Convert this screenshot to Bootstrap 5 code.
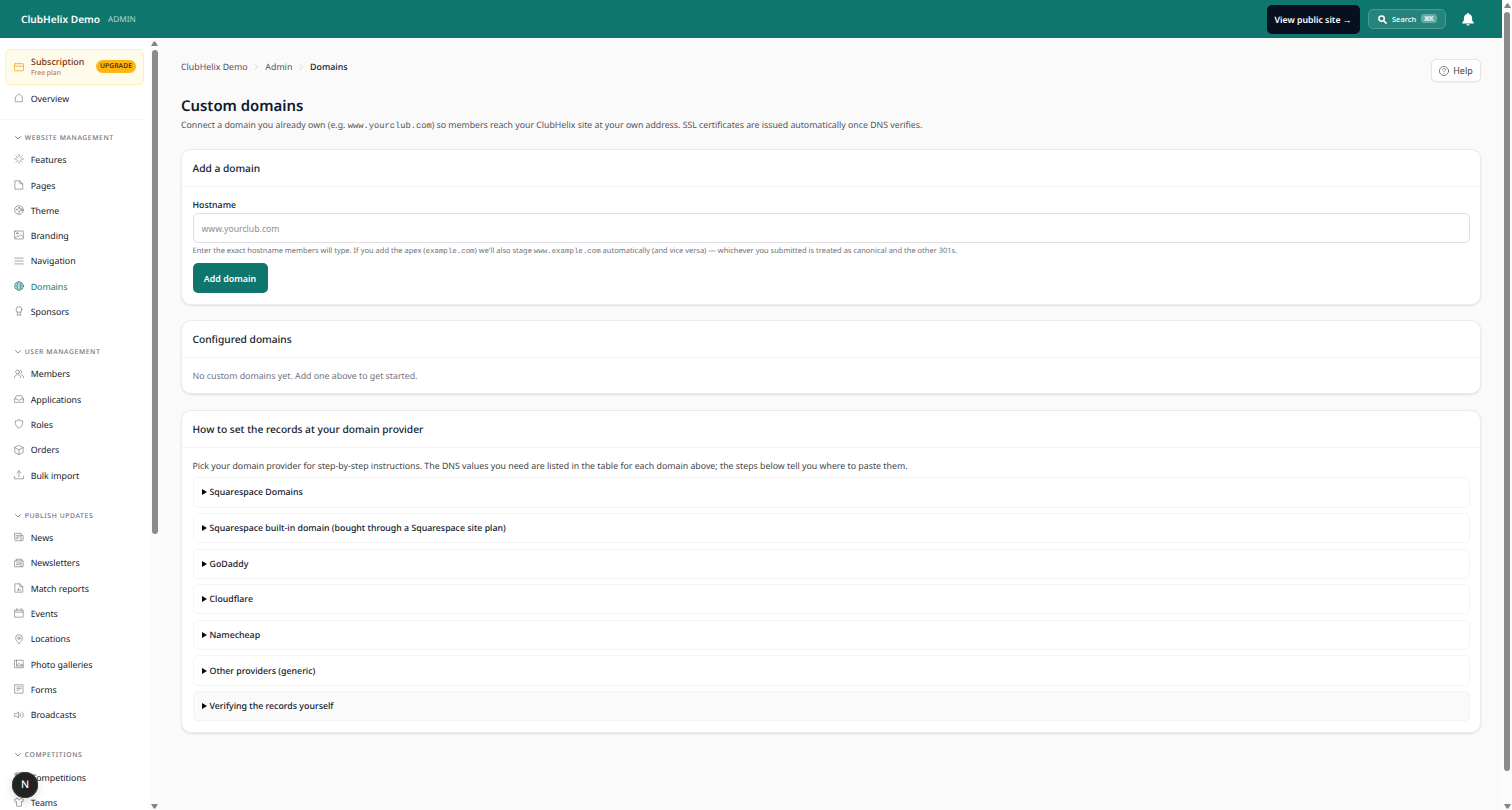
<!DOCTYPE html>
<html lang="en">
<head>
<meta charset="utf-8">
<meta name="viewport" content="width=device-width, initial-scale=1">
<title>Custom domains - ClubHelix Demo</title>
<link href="https://cdn.jsdelivr.net/npm/bootstrap@5.3.0/dist/css/bootstrap.min.css" rel="stylesheet">
<style>
:root{--teal:#0f766e;--ink:#10182b;--line:#f3f3f5}
body{font-family:"Noto Sans","Open Sans",sans-serif;font-size:8.8px;line-height:12px;color:var(--ink);background:#fafafa;height:100vh;text-rendering:geometricPrecision}
svg{fill:none;stroke:currentColor;stroke-width:1.5;stroke-linecap:round;stroke-linejoin:round;flex:none;display:block}
code{font-family:"Liberation Mono",monospace;color:inherit}
.topbar{height:38px;background:var(--teal);color:#fff;padding:0 28.5px 0 21px}
.brand-name{font-size:10.15px;font-weight:600;margin-right:8px}
.brand-tag{font-size:8.2px;color:#b4d8d4;padding-top:1px}
.btn-site{background:#08101f;color:#fff;font-size:8.75px;font-weight:600;width:93px;height:29px;border-radius:5px;margin-right:8px;line-height:12px;padding:2px 0 0}
.btn-search{width:78px;height:20px;border:1px solid #4b9a93;background:#27847c;border-radius:5px;font-size:7.5px;font-weight:500;color:#fff;padding:0 8px 0 9px;line-height:10px}
.btn-search span{margin-left:5.5px}
.btn-search kbd{font:600 6.5px/9px "Noto Sans","DejaVu Sans",sans-serif;background:#62aaa4;border-radius:3px;padding:0;width:16px;height:9.5px;text-align:center;letter-spacing:-.6px;margin-bottom:1px}
.side{width:150px;background:#fff}
.plan{margin:10.5px 6px 0 5px;height:36px;border:1px solid #fff0b8;background:#fffbeb;border-radius:5px;padding:0 7px 0 7.5px;color:#7b3306}
.plan-text{margin-left:7.5px;padding-top:1.5px}
.plan-name{font-weight:500;font-size:8.95px;line-height:12px}
.plan-tier{font-size:6.9px;line-height:11px;color:#bd6a33}
.plan-up{background:#fdb714;color:#5c2a06;font-size:6.8px;font-weight:600;border-radius:7px;width:40px;height:12.5px;line-height:12.5px;text-align:center}
.nav-first{margin:0 6px 0 0;padding:1.5px 0 8px;border-bottom:1px solid #f7f7f8}
.nav-row{height:25.33px;padding:0 0 0 13.5px;color:var(--ink);text-decoration:none}
.nav-row svg{width:10px;height:10px;color:#71717b;margin-right:7.2px;position:relative;top:-.8px}
.nav-row.active,.nav-row.active svg{color:var(--teal)}
.nav-head{height:20.7px;padding:1px 0 0 14.5px;font-size:6.8px;letter-spacing:.6px;font-weight:500;color:#71717b}
.nav-head svg{width:6px;height:6px;margin-right:4.2px;stroke-width:1.6}
.nav-group{margin-bottom:16.3px}
.sbar{background:#fcfcfc;color:#858585;padding:3px 0 1px}
.sbar svg{width:7px;height:5px;fill:currentColor;stroke:none}
.thumb{background:#8b8b8b;width:6px;border-radius:3px}
main{padding:20px 21px 0 22px;min-width:0}
.crumbs{height:18px;color:#52525c}
.crumbs svg{width:6px;height:6px;color:#d0d0d5;margin:0 5.9px}
.btn-help{width:50px;height:23px;border:1px solid #e4e4e7;background:#fff;border-radius:5px;font-size:9px;color:#3f3f46;line-height:12px;margin-top:1px;padding:0;box-shadow:0 1px 1px #0000000a}
h1{font-size:14.9px;line-height:20px;font-weight:600;margin:14px 0 0}
.intro{color:#52525c;line-height:14px;margin:2px 0 15.5px;font-size:8.76px}
.intro code{font-size:8.75px}
.panel{border:1px solid #ebebed;border-radius:10px;background:#fff;margin-bottom:15.4px;box-shadow:0 1px 2px #0000001c}
.panel-head{height:37.2px;padding:0 10.5px;border-bottom:1px solid var(--line);font-size:10.2px;font-weight:500}
.panel-body{padding:0 10.5px 10.5px}
.host-label{font-weight:500;margin:12.5px 0 2px;display:block}
.host-input{height:30px;font-size:8.7px;line-height:14px;border-color:#dfdfe3;border-radius:5px;padding:3px 8px 1px;box-shadow:none}
.host-input::placeholder{color:#8e8e96}
.hint{font-size:7.51px;color:#71717b;line-height:10px;margin:3px 0 6.2px}
.hint code{font-size:7.43px}
.btn-add{background:var(--teal);color:#fff;width:75px;height:30px;font-size:8.9px;font-weight:600;border-radius:5px;padding:2px 0 0;line-height:12px}
.provider{height:30.3px;border:1px solid #f4f4f5;border-radius:5px;padding:0 8px;font-weight:500;margin-bottom:5.35px}
.provider i{width:0;height:0;border:3px solid transparent;border-left:5.5px solid #09090b;border-right:0;margin-right:3px}
.provider:last-child{background:#fafafa;border-color:#f3f3f5;margin-bottom:0}
.dev-dot{left:12px;top:772px;width:26px;height:26px;background:#222;border-radius:50%;color:#fff;font-size:10.5px;font-weight:500;box-shadow:0 0 0 1px #3a3a3a inset,0 3px 10px #00000026}
</style>
</head>
<body class="d-flex overflow-hidden">
<svg class="d-none">
<symbol id="home" viewBox="0 0 24 24"><path d="M4 9 12 2l8 7v12H4z"/></symbol>
<symbol id="spark" viewBox="0 0 24 24"><path d="M12 1v6M12 17v6M1 12h6M17 12h6M4.500 4.500l4 4M15.500 15.500l4 4M19.500 4.500l-4 4M8.500 15.500l-4 4"/></symbol>
<symbol id="page" viewBox="0 0 24 24"><path d="M3 2h11l7 7v13H3zM14 2v7h7"/></symbol>
<symbol id="theme" viewBox="0 0 24 24"><circle cx="12" cy="12" r="10.500"/><path d="M12 22v-7M12 15c4-2 6 0 9-2"/><circle cx="7" cy="11" r="1.500"/><circle cx="12" cy="7" r="1.500"/><circle cx="17" cy="10" r="1.500"/></symbol>
<symbol id="image" viewBox="0 0 24 24"><rect x="1.500" y="2.500" width="21" height="19" rx="1"/><path d="m3 19 6-5 3 2 4-5 6 6"/><circle cx="8" cy="8" r="2"/></symbol>
<symbol id="menu" viewBox="0 0 24 24"><path d="M2 5h20M2 12h20M2 19h20"/></symbol>
<symbol id="globe" viewBox="0 0 24 24"><circle cx="12" cy="12" r="10.500"/><ellipse cx="12" cy="12" rx="4.500" ry="10.500"/><path d="M2 12h20M3.500 7h17M3.500 17h17"/></symbol>
<symbol id="award" viewBox="0 0 24 24"><circle cx="12" cy="8.500" r="7"/><path d="M8 15v8l4-2.500 4 2.500v-8"/></symbol>
<symbol id="users" viewBox="0 0 24 24"><circle cx="8.500" cy="7" r="4.500"/><path d="M1 21c0-10 15-10 15 0M15 2.500c5 0 5 9 0 9M18 14c4 1 5 3 5 7"/></symbol>
<symbol id="inbox" viewBox="0 0 24 24"><path d="M1.500 12 6 4h12l4.500 8v8h-21zM1.500 12H8l2 3h4l2-3h6.500"/></symbol>
<symbol id="shield" viewBox="0 0 24 24"><path d="M12 2c3 2 5 2.500 8.500 2.500C22 14 18 19 12 22 6 19 2 14 3.500 4.500 7 4.500 9 4 12 2z"/></symbol>
<symbol id="box" viewBox="0 0 24 24"><path d="m12 1 10 5v12l-10 5-10-5V6zM2 6l10 5.500L22 6M12 11.500V23"/></symbol>
<symbol id="upload" viewBox="0 0 24 24"><path d="M1 15v6h22v-6M12 16V2M7 7l5-5 5 5"/></symbol>
<symbol id="news" viewBox="0 0 24 24"><path d="M2 3h15v18H4c-1 0-2-1-2-2zM17 8h5v11c0 3-5 3-5 0M5 8h9M5 12h9M5 16h5"/></symbol>
<symbol id="letter" viewBox="0 0 24 24"><path d="M2 7h20v14H2zM5 7V3h14v4M6 12h12M6 16h7M17 12v9"/></symbol>
<symbol id="report" viewBox="0 0 24 24"><path d="M3 2h11l7 7v13H3zM14 2v7h7M8 17h3v-4M11 17h5"/></symbol>
<symbol id="cal" viewBox="0 0 24 24"><path d="M2 5h20v17H2zM2 10h20M7 1v5M17 1v5"/></symbol>
<symbol id="pin" viewBox="0 0 24 24"><path d="M12 23C7 17 4 14 4 9.500a8 8 0 0 1 16 0C20 14 17 17 12 23z"/><circle cx="12" cy="10" r="3"/></symbol>
<symbol id="photos" viewBox="0 0 24 24"><path d="M2 3h20v18H2zM6 3v14h16M7 16l5-6 4 5 3-3 3 3"/></symbol>
<symbol id="form" viewBox="0 0 24 24"><path d="M2.500 2h19v20h-19zM7 7h10M7 11h10M7 15h5"/></symbol>
<symbol id="sound" viewBox="0 0 24 24"><path d="M1 9h4l6-4v14l-6-4H1zM15 8c2 2 2 6 0 8M19 5c5 4 5 10 0 14"/></symbol>
<symbol id="trophy" viewBox="0 0 24 24"><path d="M6 2h12v8c0 7-12 7-12 0zM6 4H2c0 5 2 6 4 6M18 4h4c0 5-2 6-4 6M12 15v6M7 22h10"/></symbol>
<symbol id="shirt" viewBox="0 0 24 24"><path d="M8 3 1 6l2 6 3-1v11h12V11l3 1 2-6-7-3c-1 4-7 4-8 0z"/></symbol>
<symbol id="down" viewBox="0 0 12 12"><path d="m1 3 5 5 5-5"/></symbol>
<symbol id="right" viewBox="0 0 12 12"><path d="m4 1 5 5-5 5"/></symbol>
<symbol id="tri-up" viewBox="0 0 7 5"><path d="M0 5 2.700.600h1.600L7 5z"/></symbol>
<symbol id="tri-down" viewBox="0 0 7 5"><path d="M0 0l2.700 4.400h1.600L7 0z"/></symbol>
</svg>

<div class="d-flex flex-column flex-grow-1 h-100" style="min-width:0">
  <header class="topbar d-flex align-items-center flex-shrink-0">
    <span class="brand-name">ClubHelix Demo</span><span class="brand-tag">ADMIN</span>
    <div class="d-flex align-items-center ms-auto">
      <a class="btn btn-site border-0 d-flex align-items-center justify-content-center" href="#">View public site →</a>
      <button class="btn btn-search d-flex align-items-center">
        <svg width="9" height="9" viewBox="0 0 12 12" style="stroke-width:2"><circle cx="4.800" cy="4.800" r="3.600"/><path d="m7.600 7.600 3.200 3.200"/></svg>
        <span>Search</span><kbd class="ms-auto">⌘K</kbd>
      </button>
      <svg class="ms-3" width="12" height="13" viewBox="0 0 12 13" style="fill:#fff;stroke:none"><path d="M6 0c.700 0 1 .400 1 1.100C9 1.600 10 3 10 5c0 2.600.600 3.600 1.800 4.700v.800H.200v-.800C1.400 8.600 2 7.600 2 5c0-2 1-3.400 3-3.900C5 .400 5.300 0 6 0zM4.300 11.200h3.400C7.600 13 4.400 13 4.300 11.200z"/></svg>
    </div>
  </header>

  <div class="d-flex flex-grow-1 overflow-hidden">
    <aside class="side flex-shrink-0 overflow-hidden">
      <div class="plan d-flex align-items-center">
        <svg width="10" height="10" viewBox="0 0 24 24" style="color:#f5a524;stroke-width:2"><rect x="1" y="4" width="22" height="17" rx="2"/><path d="M1 10h22"/></svg>
        <div class="plan-text"><div class="plan-name">Subscription</div><div class="plan-tier">Free plan</div></div>
        <span class="plan-up ms-auto">UPGRADE</span>
      </div>
      <nav class="nav-first">
        <a class="nav-row d-flex align-items-center" href="#"><svg><use href="#home"/></svg>Overview</a>
      </nav>
      <nav class="nav-group" style="padding-top:6.500px">
        <div class="nav-head d-flex align-items-center"><svg><use href="#down"/></svg>WEBSITE MANAGEMENT</div>
        <a class="nav-row d-flex align-items-center" href="#"><svg><use href="#spark"/></svg>Features</a>
        <a class="nav-row d-flex align-items-center" href="#"><svg><use href="#page"/></svg>Pages</a>
        <a class="nav-row d-flex align-items-center" href="#"><svg><use href="#theme"/></svg>Theme</a>
        <a class="nav-row d-flex align-items-center" href="#"><svg><use href="#image"/></svg>Branding</a>
        <a class="nav-row d-flex align-items-center" href="#"><svg><use href="#menu"/></svg>Navigation</a>
        <a class="nav-row d-flex align-items-center active" href="#"><svg><use href="#globe"/></svg>Domains</a>
        <a class="nav-row d-flex align-items-center" href="#"><svg><use href="#award"/></svg>Sponsors</a>
      </nav>
      <nav class="nav-group">
        <div class="nav-head d-flex align-items-center"><svg><use href="#down"/></svg>USER MANAGEMENT</div>
        <a class="nav-row d-flex align-items-center" href="#"><svg><use href="#users"/></svg>Members</a>
        <a class="nav-row d-flex align-items-center" href="#"><svg><use href="#inbox"/></svg>Applications</a>
        <a class="nav-row d-flex align-items-center" href="#"><svg><use href="#shield"/></svg>Roles</a>
        <a class="nav-row d-flex align-items-center" href="#"><svg><use href="#box"/></svg>Orders</a>
        <a class="nav-row d-flex align-items-center" href="#"><svg><use href="#upload"/></svg>Bulk import</a>
      </nav>
      <nav class="nav-group">
        <div class="nav-head d-flex align-items-center"><svg><use href="#down"/></svg>PUBLISH UPDATES</div>
        <a class="nav-row d-flex align-items-center" href="#"><svg><use href="#news"/></svg>News</a>
        <a class="nav-row d-flex align-items-center" href="#"><svg><use href="#letter"/></svg>Newsletters</a>
        <a class="nav-row d-flex align-items-center" href="#"><svg><use href="#report"/></svg>Match reports</a>
        <a class="nav-row d-flex align-items-center" href="#"><svg><use href="#cal"/></svg>Events</a>
        <a class="nav-row d-flex align-items-center" href="#"><svg><use href="#pin"/></svg>Locations</a>
        <a class="nav-row d-flex align-items-center" href="#"><svg><use href="#photos"/></svg>Photo galleries</a>
        <a class="nav-row d-flex align-items-center" href="#"><svg><use href="#form"/></svg>Forms</a>
        <a class="nav-row d-flex align-items-center" href="#"><svg><use href="#sound"/></svg>Broadcasts</a>
      </nav>
      <nav class="nav-group">
        <div class="nav-head d-flex align-items-center"><svg><use href="#down"/></svg>COMPETITIONS</div>
        <a class="nav-row d-flex align-items-center" href="#"><svg><use href="#trophy"/></svg>Competitions</a>
        <a class="nav-row d-flex align-items-center" href="#"><svg><use href="#shirt"/></svg>Teams</a>
      </nav>
    </aside>
    <div class="sbar d-flex flex-column align-items-center flex-shrink-0" style="width:9px">
      <svg><use href="#tri-up"/></svg><div class="thumb mt-1" style="height:484px"></div><svg class="mt-auto"><use href="#tri-down"/></svg>
    </div>

    <main class="flex-grow-1">
      <div class="d-flex justify-content-between" style="height:24px">
        <div class="crumbs d-flex align-items-center">ClubHelix Demo<svg><use href="#right"/></svg>Admin<svg><use href="#right"/></svg><span style="color:var(--ink);font-weight:500">Domains</span></div>
        <button class="btn btn-help d-flex align-items-center justify-content-center">
          <svg width="10" height="10" viewBox="0 0 24 24" class="me-1"><circle cx="12" cy="12" r="11"/><path d="M8.500 9c0-4 7-4 7 0 0 2.500-3.500 2.500-3.500 5M12 17.500v.500"/></svg>Help
        </button>
      </div>
      <h1>Custom domains</h1>
      <p class="intro">Connect a domain you already own (e.g. <code>www.yourclub.com</code>) so members reach your ClubHelix site at your own address. SSL certificates are issued automatically once DNS verifies.</p>

      <section class="panel">
        <div class="panel-head d-flex align-items-center">Add a domain</div>
        <div class="panel-body">
          <label class="host-label" for="host">Hostname</label>
          <input id="host" class="form-control host-input" placeholder="www.yourclub.com">
          <p class="hint">Enter the exact hostname members will type. If you add the apex (<code>example.com</code>) we'll also stage <code>www.example.com</code> automatically (and vice versa) — whichever you submitted is treated as canonical and the other 301s.</p>
          <button class="btn btn-add border-0 d-flex align-items-center justify-content-center">Add domain</button>
        </div>
      </section>

      <section class="panel">
        <div class="panel-head d-flex align-items-center">Configured domains</div>
        <div class="panel-body" style="padding-top:12px;padding-bottom:11px;color:#71717b">No custom domains yet. Add one above to get started.</div>
      </section>

      <section class="panel">
        <div class="panel-head d-flex align-items-center">How to set the records at your domain provider</div>
        <div class="panel-body">
          <p style="margin:12px 0 5.200px;color:#3f3f46">Pick your domain provider for step-by-step instructions. The DNS values you need are listed in the table for each domain above; the steps below tell you where to paste them.</p>
          <div>
            <div class="provider d-flex align-items-center"><i></i>Squarespace Domains</div>
            <div class="provider d-flex align-items-center"><i></i>Squarespace built-in domain (bought through a Squarespace site plan)</div>
            <div class="provider d-flex align-items-center"><i></i>GoDaddy</div>
            <div class="provider d-flex align-items-center"><i></i>Cloudflare</div>
            <div class="provider d-flex align-items-center"><i></i>Namecheap</div>
            <div class="provider d-flex align-items-center"><i></i>Other providers (generic)</div>
            <div class="provider d-flex align-items-center"><i></i>Verifying the records yourself</div>
          </div>
        </div>
      </section>
    </main>
  </div>
</div>

<div class="sbar d-flex flex-column align-items-center flex-shrink-0" style="width:10px">
  <svg><use href="#tri-up"/></svg><div class="thumb mt-1" style="height:759px"></div><svg class="mt-auto"><use href="#tri-down"/></svg>
</div>
<div class="dev-dot position-absolute d-flex align-items-center justify-content-center">N</div>
</body>
</html>
